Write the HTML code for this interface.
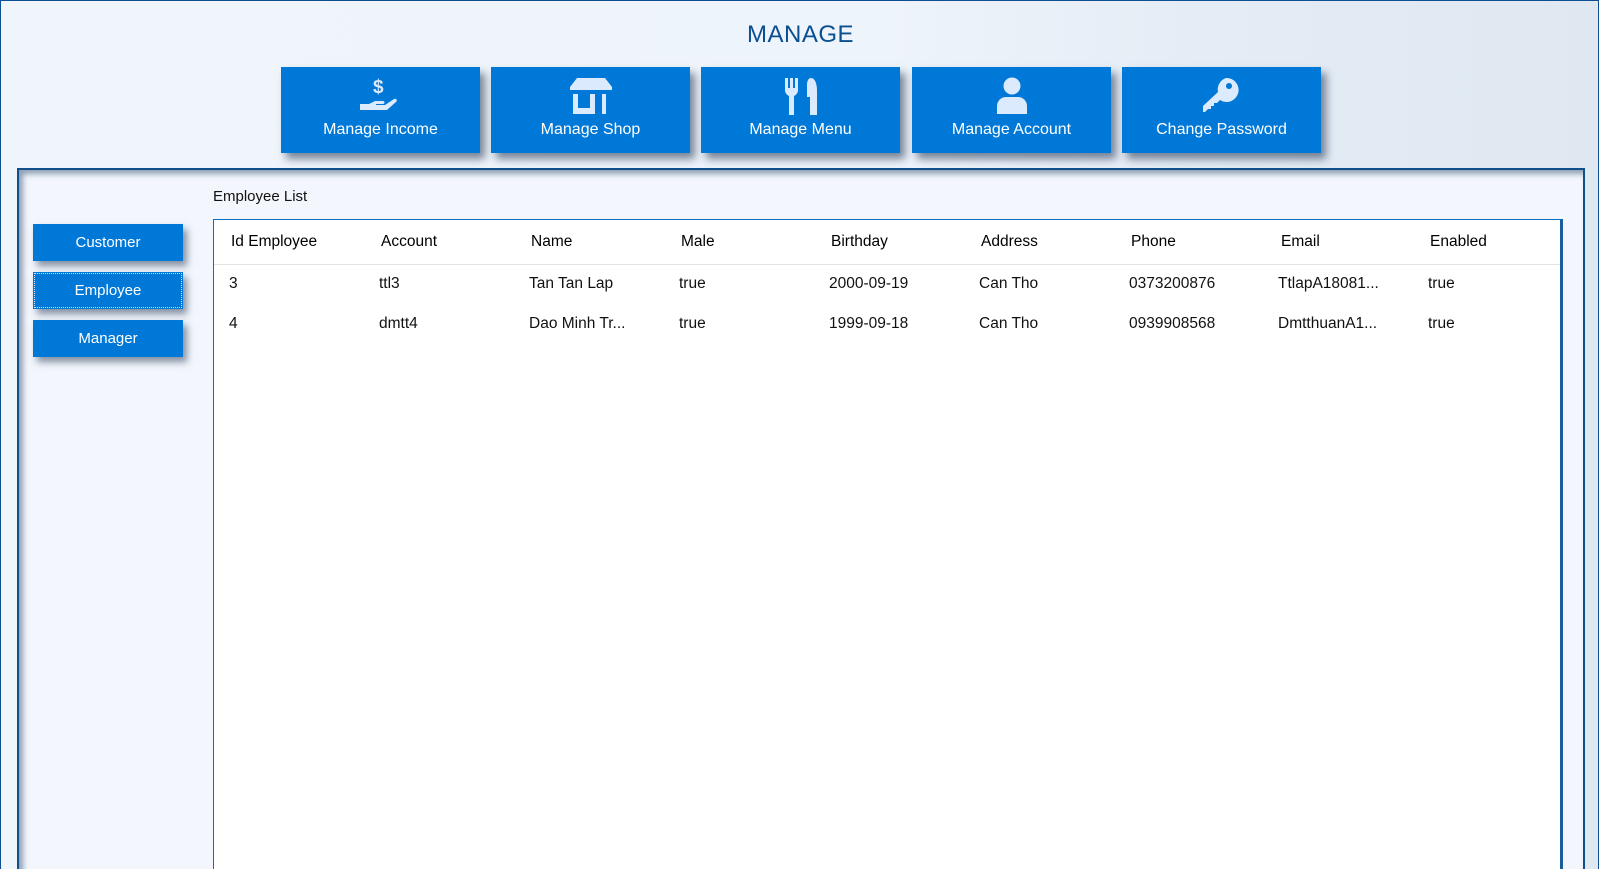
<!DOCTYPE html>
<html><head><meta charset="utf-8"><style>
*{box-sizing:border-box;margin:0;padding:0}
html,body{width:1599px;height:869px;overflow:hidden}
body{font-family:"Liberation Sans",sans-serif;background:linear-gradient(90deg,#f0f5fb 0%,#eef4fb 55%,#e4ecf5 75%,#dfe8f1 100%);position:relative;border:1px solid #0e4f94;border-bottom:none}
.title{position:absolute;left:0;width:1599px;top:20px;text-align:center;font-size:24px;color:#0b4f91;letter-spacing:0.5px}
.tb{position:absolute;top:66px;width:199px;height:86px;background:#0078d7;color:#fff;font-size:16px;text-align:center;box-shadow:5px 6px 8px rgba(20,40,70,.55)}
.tb svg{position:absolute;left:50%;top:9px;transform:translateX(-50%)}
.tb span{position:absolute;left:0;right:0;top:54px}
.panel{position:absolute;left:16px;top:167px;width:1568px;height:710px;background:#f3f7fd;border:2px solid #104f8a;box-shadow:inset 4px 4px 6px rgba(20,50,90,.45)}
.lbl{position:absolute;left:212px;top:187px;font-size:15px;color:#111}
.sb{position:absolute;left:32px;width:150px;height:37px;background:#0078d7;color:#fff;font-size:15px;text-align:center;line-height:37px;box-shadow:4px 5px 7px rgba(20,40,70,.5)}
.tbl{position:absolute;left:212px;top:218px;width:1350px;height:660px;background:#fff;border:1.5px solid #0a6cc4;border-right:3px solid #1a5f9c;border-bottom:3px solid #1a5f9c}
.sep{position:absolute;left:0;right:0;top:44px;height:1px;background:#e3e3e3}
.c{position:absolute;font-size:15.5px;color:#111;white-space:nowrap}
.h{color:#000}
</style></head><body>
<div class="title">MANAGE</div>

<div class="tb" style="left:280px"><svg width="44" height="40" viewBox="0 0 44 40" fill="#dbeafc"><text x="14" y="17" font-size="19" font-weight="bold" fill="#dbeafc" font-family="Liberation Sans">$</text><path d="M1 28h9l6-3h8c2 0 2 3 0 3h-7v1h9l9-6c2-1 4 1 2 3l-9 8H1z"/></svg><span>Manage Income</span></div>
<div class="tb" style="left:490px"><svg width="46" height="40" viewBox="0 0 46 40" fill="#dbeafc"><path d="M9 2h28l7 9v3H2v-3z"/><rect x="5" y="18" width="5" height="20"/><rect x="5" y="32" width="22" height="6"/><rect x="22" y="18" width="5" height="20"/><rect x="34" y="18" width="4" height="20"/></svg><span>Manage Shop</span></div>
<div class="tb" style="left:700px"><svg width="36" height="40" viewBox="0 0 36 40" fill="#dbeafc"><path d="M2 2h3v10h2V2h3v10h2V2h3v12c0 3-2 5-4 6v19H6V20c-2-1-4-3-4-6z"/><path d="M28 2c4 0 6 6 6 13v24h-7V21h-3V9c0-5 2-7 4-7z"/></svg><span>Manage Menu</span></div>
<div class="tb" style="left:911px"><svg width="40" height="40" viewBox="0 0 40 40" fill="#dbeafc"><circle cx="20" cy="10" r="8.5"/><path d="M5 38v-8c0-5 4-9 9-9h12c5 0 9 4 9 9v8z"/></svg><span>Manage Account</span></div>
<div class="tb" style="left:1121px"><svg width="40" height="40" viewBox="0 0 40 40" fill="#dbeafc"><path d="M24 2a12 12 0 1 1-6 22l-3 3h-3v3h-3v3H6l-3 3H1v-6L16 16a12 12 0 0 1 8-14zm3 5a3 3 0 1 0 0.01 0z" fill-rule="evenodd"/></svg><span>Change Password</span></div>

<div class="panel"></div>
<div class="lbl">Employee List</div>
<div class="sb" style="top:223px">Customer</div>
<div class="sb" style="top:271px;outline:1px dotted #cfe3f7;outline-offset:-2px">Employee</div>
<div class="sb" style="top:319px">Manager</div>

<div class="tbl">
<div class="sep"></div>
</div>
<div class="c h" style="left:230px;top:232px">Id Employee</div>
<div class="c h" style="left:380px;top:232px">Account</div>
<div class="c h" style="left:530px;top:232px">Name</div>
<div class="c h" style="left:680px;top:232px">Male</div>
<div class="c h" style="left:830px;top:232px">Birthday</div>
<div class="c h" style="left:980px;top:232px">Address</div>
<div class="c h" style="left:1130px;top:232px">Phone</div>
<div class="c h" style="left:1280px;top:232px">Email</div>
<div class="c h" style="left:1429px;top:232px">Enabled</div>

<div class="c" style="left:228px;top:274px">3</div>
<div class="c" style="left:378px;top:274px">ttl3</div>
<div class="c" style="left:528px;top:274px">Tan Tan Lap</div>
<div class="c" style="left:678px;top:274px">true</div>
<div class="c" style="left:828px;top:274px">2000-09-19</div>
<div class="c" style="left:978px;top:274px">Can Tho</div>
<div class="c" style="left:1128px;top:274px">0373200876</div>
<div class="c" style="left:1277px;top:274px">TtlapA18081...</div>
<div class="c" style="left:1427px;top:274px">true</div>

<div class="c" style="left:228px;top:314px">4</div>
<div class="c" style="left:378px;top:314px">dmtt4</div>
<div class="c" style="left:528px;top:314px">Dao Minh Tr...</div>
<div class="c" style="left:678px;top:314px">true</div>
<div class="c" style="left:828px;top:314px">1999-09-18</div>
<div class="c" style="left:978px;top:314px">Can Tho</div>
<div class="c" style="left:1128px;top:314px">0939908568</div>
<div class="c" style="left:1277px;top:314px">DmtthuanA1...</div>
<div class="c" style="left:1427px;top:314px">true</div>
</body></html>
